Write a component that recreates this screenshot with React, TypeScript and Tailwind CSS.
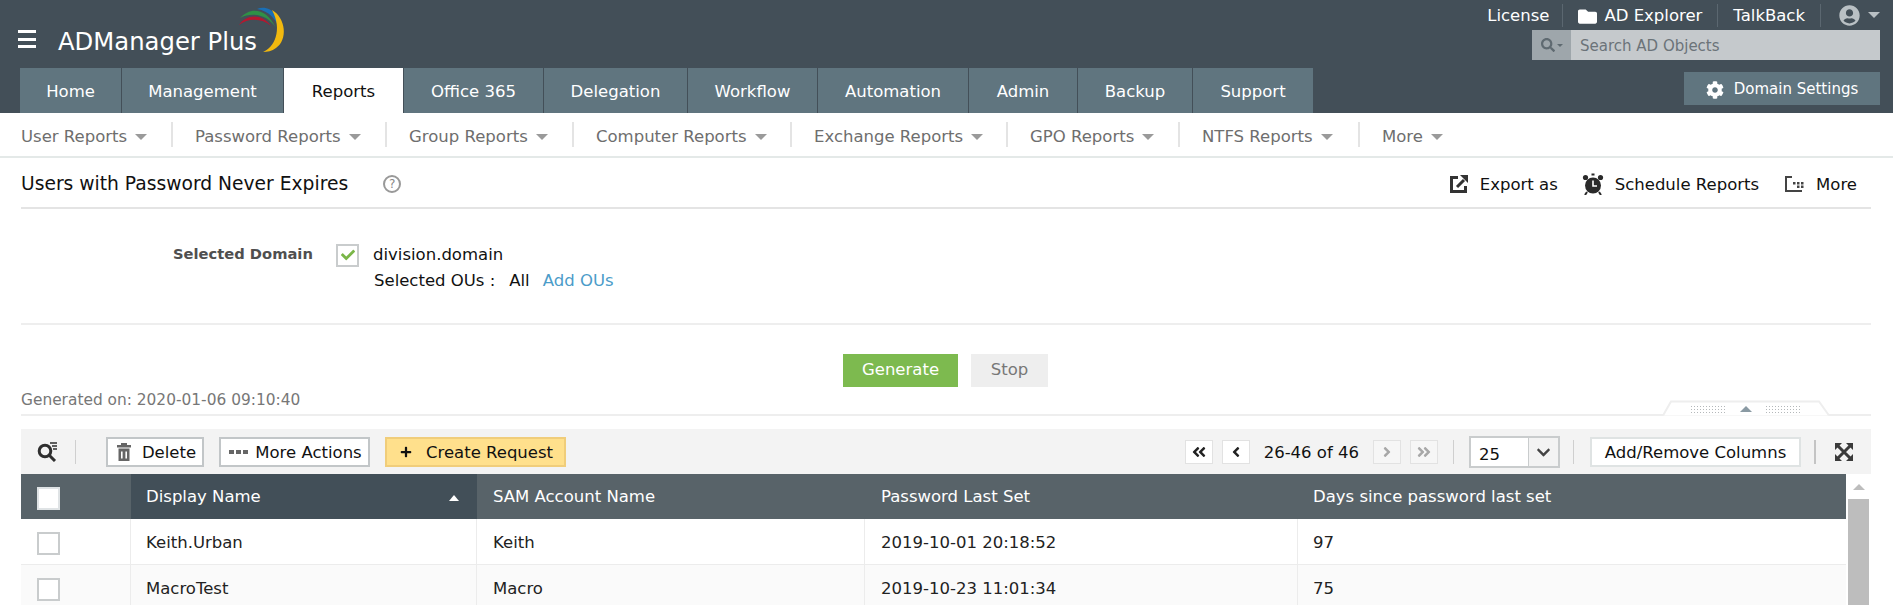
import React from "react";
import { FaCog, FaUserCircle, FaSearch, FaAngleDoubleLeft, FaAngleLeft, FaAngleRight, FaAngleDoubleRight, FaChevronDown, FaCheck, FaPlus, FaFolder } from "react-icons/fa";

const tabs = [
  { t: "Home", w: "w-[101px]" },
  { t: "Management", w: "w-[161px]" },
  { t: "Reports", w: "w-[119px]", active: true },
  { t: "Office 365", w: "w-[139px]" },
  { t: "Delegation", w: "w-[143px]" },
  { t: "Workflow", w: "w-[129px]" },
  { t: "Automation", w: "w-[150px]" },
  { t: "Admin", w: "w-[108px]" },
  { t: "Backup", w: "w-[114px]" },
  { t: "Support", w: "w-[120px]" },
];

const subs = [
  { t: "User Reports", w: "w-[152px]" },
  { t: "Password Reports", w: "w-[214px]" },
  { t: "Group Reports", w: "w-[187px]" },
  { t: "Computer Reports", w: "w-[218px]" },
  { t: "Exchange Reports", w: "w-[216px]" },
  { t: "GPO Reports", w: "w-[172px]" },
  { t: "NTFS Reports", w: "w-[180px]" },
  { t: "More", w: "w-[90px]" },
];

const Caret = ({ c = "border-t-[#9a9a9a]" }: { c?: string }) => (
  <span className={`inline-block w-0 h-0 border-x-[6px] border-x-transparent border-t-[6px] ${c}`} />
);

const Sep = () => <span className="w-px h-[23px] bg-[#5b6770]" />;

const Logo = () => (
  <svg width="52" height="52" viewBox="0 0 52 52" className="absolute left-[236px] top-[4px]">
    <path d="M3 21 C10 10 26 9 35 22 C26 14 12 14 3 21Z" fill="#b5172f" />
    <path d="M4 14 C14 3 30 3 40 24 C31 10 16 8 4 14Z" fill="#2f9146" />
    <path d="M21 5 C32 0 46 10 45 30 C41 15 33 7 21 5Z" fill="#1a6fb5" />
    <path d="M36 6 C50 14 52 36 40 44 C36 47 31 48 27 48 C38 44 47 26 36 6Z" fill="#f2b90f" />
  </svg>
);

const ExportIcon = () => (
  <svg width="20" height="20" viewBox="0 0 20 20">
    <path d="M1 2h8v3H4v11h11v-4h3v7H1z" fill="#333" />
    <path d="M11 1h8v8z" fill="#333" />
    <path d="M8 13l7-7" stroke="#333" strokeWidth="3" />
  </svg>
);
const ClockIcon = () => (
  <svg width="22" height="22" viewBox="0 0 22 22">
    <circle cx="11" cy="12.500" r="8" fill="#2a2a2a" />
    <circle cx="3.500" cy="4.500" r="2.600" fill="#2a2a2a" />
    <circle cx="18.500" cy="4.500" r="2.600" fill="#2a2a2a" />
    <rect x="9.500" y="0.500" width="3" height="2" fill="#2a2a2a" />
    <path d="M5 19l-2 3M17 19l2 3" stroke="#2a2a2a" strokeWidth="2" />
    <path d="M11 7.500v5.500h4" stroke="#fff" strokeWidth="1.600" fill="none" />
  </svg>
);
const MoreIcon = () => (
  <svg width="20" height="20" viewBox="0 0 20 20">
    <path d="M1 2h7v2H3v12h15v2H1z" fill="#444" />
    <rect x="9" y="8" width="2.500" height="2.500" fill="#444" />
    <rect x="13" y="8" width="2.500" height="2.500" fill="#444" />
    <rect x="17" y="8" width="2.500" height="2.500" fill="#444" />
    <rect x="13" y="11.500" width="2.500" height="2.500" fill="#444" />
    <rect x="17" y="11.500" width="2.500" height="2.500" fill="#444" />
  </svg>
);
const TrashIcon = () => (
  <svg width="14" height="18" viewBox="0 0 14 18">
    <rect x="4" y="0" width="6" height="2" fill="#666" />
    <rect x="0" y="2" width="14" height="2.500" fill="#666" />
    <path d="M1.500 5.500h11V18h-11z" fill="#666" />
    <path d="M4.800 8.500v7M9.200 8.500v7" stroke="#fff" strokeWidth="1.600" />
  </svg>
);
const SearchList = () => (
  <svg width="22" height="20" viewBox="0 0 22 20">
    <circle cx="8" cy="9" r="5.800" fill="none" stroke="#2f2f2f" strokeWidth="3" />
    <path d="M12 13l6 6" stroke="#2f2f2f" strokeWidth="3" />
    <path d="M13 1h7M15 4h5M16 7h4" stroke="#2f2f2f" strokeWidth="1.500" />
  </svg>
);
const ExpandIcon = () => (
  <svg width="18" height="18" viewBox="0 0 18 18">
    <path d="M0 0h7L0 7zM18 0h-7l7 7zM0 18h7l-7-7zM18 18h-7l7-7z" fill="#3a3a3a" />
    <path d="M3 3l12 12M15 3L3 15" stroke="#3a3a3a" strokeWidth="3" />
  </svg>
);
const Handle = () => (
  <svg width="168" height="17" viewBox="0 0 168 17" className="absolute left-[1642px] top-[75px]">
    <path d="M0 15.500L8 1.500H156L166 15.500" fill="#fff" stroke="#eeeeee" strokeWidth="2" />
    {[0, 1, 2].map((r) =>
      Array.from({ length: 12 }).map((_, i) => (
        <g key={`${r}-${i}`}>
          <rect x={28 + i * 3} y={6 + r * 3} width="1" height="1" fill="#b4b8ba" />
          <rect x={103 + i * 3} y={6 + r * 3} width="1" height="1" fill="#b4b8ba" />
        </g>
      ))
    )}
    <path d="M77 12l6-6 6 6z" fill="#8a9aa3" />
  </svg>
);
const Box = ({ header }: { header?: boolean }) => (
  <span className={`block w-[23px] h-[23px] border-2 ${header ? "bg-white border-[#dfe3e5]" : "bg-white border-[#c9cccd]"}`} />
);
const PageBtn = ({ dim, children }: { dim?: boolean; children: React.ReactNode }) => (
  <span className={`w-[28px] h-[24px] flex items-center justify-center border border-[#e2e2e2] ${dim ? "bg-[#f6f6f6] text-[#a8a8a8]" : "bg-white text-[#222]"}`}>{children}</span>
);
const ToolSep = () => <span className="block w-px h-[24px] bg-[#cfcfcf]" />;

const cols = "grid grid-cols-[110px_346px_388px_433px_1fr]";
const Row = ({ a, b, c, d, alt }: { a: string; b: string; c: string; d: string; alt?: boolean }) => (
  <div className={`${cols} h-[46px] border-b border-[#ececec] ${alt ? "bg-[#fafafa]" : "bg-white"} text-[#222]`}>
    <div className="flex items-center pt-[4px] pl-[16px] border-r border-[#ececec]"><Box /></div>
    <div className="flex items-center pt-[4px] pl-[15px] border-r border-[#ececec]">{a}</div>
    <div className="flex items-center pt-[4px] pl-[16px] border-r border-[#ececec]">{b}</div>
    <div className="flex items-center pt-[4px] pl-[16px] border-r border-[#ececec]">{c}</div>
    <div className="flex items-center pt-[4px] pl-[15px]">{d}</div>
  </div>
);

export default function App() {
  return (
    <div className="w-[1893px] h-[605px] overflow-hidden bg-white text-[16.5px] text-[#222] font-['DejaVu_Sans',sans-serif]">
      <header className="relative h-[113px] bg-[#434f58] flex justify-between">
        <div className="flex flex-col justify-between">
          <div className="relative h-[68px]">
            <div className="absolute left-[18px] top-[30px] w-[18px] h-[18px] flex flex-col justify-between">
              <span className="h-[3px] bg-white" /><span className="h-[3px] bg-white" /><span className="h-[3px] bg-white" />
            </div>
            <span className="absolute left-[58px] top-[25px] text-[24.3px] leading-[34px] text-white whitespace-nowrap">ADManager Plus</span>
            <Logo />
          </div>
          <nav className="flex pl-[20px] gap-[2px]">
            {tabs.map((x) => (
              <div key={x.t} className={`h-[45px] pt-[3px] flex items-center justify-center ${x.w} ${x.active ? "bg-white text-[#111]" : "bg-[#60757f] text-white"} -mr-[1px]`}>{x.t}</div>
            ))}
          </nav>
        </div>
        <div className="flex flex-col items-end pr-[13px]">
          <div className="h-[30px] flex items-center gap-[15px] text-white">
            <span className="-mr-[2px] pt-[2px]">License</span><Sep />
            <span className="flex items-center gap-[7px] pt-[2px]"><FaFolder className="text-[19px]" />AD Explorer</span><Sep />
            <span className="pt-[2px]">TalkBack</span><Sep />
            <span className="flex items-center gap-[8px] pl-[3px]"><FaUserCircle className="text-[21px] text-[#b9c0c4]" /><Caret c="border-t-[#b9c0c4]" /></span>
          </div>
          <div className="w-[348px] h-[30px] flex bg-[#c5c9cc] text-[15px]">
            <span className="w-[39px] bg-[#9ea6ab] flex items-center justify-center gap-[2px] text-[#5f6a71]"><FaSearch className="text-[14px]" /><span className="inline-block w-0 h-0 border-x-[3px] border-x-transparent border-t-[3px] border-t-[#5f6a71]" /></span>
            <span className="pl-[9px] pt-[2px] flex items-center text-[#6b7379]">Search AD Objects</span>
          </div>
          <div className="mt-[12px] w-[196px] h-[33px] pt-[2px] bg-[#60757f] text-white text-[15px] flex items-center justify-center gap-[10px]"><FaCog className="text-[18px]" />Domain Settings</div>
        </div>
      </header>

      <div className="h-[45px] flex items-center pl-[21px] border-b-2 border-[#e4e9e8] text-[#6e6e6e]">
        {subs.map((s, i) => (
          <div key={s.t} className={`h-[25px] pt-[5px] flex items-center gap-[8px] whitespace-nowrap ${s.w} ${i < subs.length - 1 ? "border-r-2 border-[#e4e4e4]" : ""} ${i > 0 ? "pl-[22px]" : ""}`}>
            {s.t}<Caret />
          </div>
        ))}
      </div>

      <main className="pl-[21px] pr-[22px]">
        <div className="h-[51px] pt-[3px] flex items-center justify-between border-b-2 border-[#e4e4e4]">
          <div className="flex items-center gap-[35px]">
            <span className="text-[18.7px] text-[#111]">Users with Password Never Expires</span>
            <span className="w-[18px] h-[18px] rounded-full border-2 border-[#999] text-[#888] text-[12px] flex items-center justify-center">?</span>
          </div>
          <div className="flex items-center text-[#111] pr-[14px]">
            <span className="flex items-center gap-[11px] mr-[24px]"><ExportIcon /><span className="pt-[2px]">Export as</span></span>
            <span className="flex items-center gap-[11px] mr-[25px]"><ClockIcon /><span className="pt-[2px]">Schedule Reports</span></span>
            <span className="flex items-center gap-[12px]"><MoreIcon /><span className="pt-[2px]">More</span></span>
          </div>
        </div>

        <div className="h-[116px] border-b-2 border-[#eeeeee] pt-[34px] flex">
          <span className="ml-[152px] w-[163px] h-[23px] flex items-center font-bold text-[14.7px] text-[#4f4f4f]">Selected Domain</span>
          <div>
            <div className="flex items-center gap-[14px]">
              <span className="w-[23px] h-[23px] border-2 border-[#c9cccd] flex items-center justify-center text-[#7ab648]"><FaCheck className="text-[14px]" /></span>
              <span className="text-[#111]">division.domain</span>
            </div>
            <div className="pl-[38px] mt-[1px] text-[#111] flex">
              <span>Selected OUs :</span><span className="ml-[14px]">All</span><span className="ml-[13px] text-[#4b9cc9]">Add OUs</span>
            </div>
          </div>
        </div>

        <div className="relative h-[91px] border-b-2 border-[#eeeeee]">
          <div className="absolute left-[822px] top-[29px] flex gap-[13px]">
            <span className="w-[115px] h-[33px] bg-[#7dba4f] text-white flex items-center justify-center">Generate</span>
            <span className="w-[77px] h-[33px] bg-[#eeeeee] text-[#777] flex items-center justify-center">Stop</span>
          </div>
          <span className="absolute left-0 top-[63px] text-[15.4px] leading-[24px] text-[#777]">Generated on: 2020-01-06 09:10:40</span>
          <Handle />
        </div>

        <div className="mt-[13px] h-[45px] pt-[1px] bg-[#f3f3f3] flex items-center">
          <span className="ml-[16px]"><SearchList /></span>
          <span className="ml-[16px]"><ToolSep /></span>
          <div className="ml-[30px] flex items-center gap-[15px]">
            <span className="w-[98px] h-[30px] pt-[3px] pl-[3px] bg-white border-2 border-[#c2c6c8] flex items-center justify-center gap-[11px] text-[#111]"><span className="-mt-[3px]"><TrashIcon /></span>Delete</span>
            <span className="w-[151px] h-[30px] pt-[3px] pl-[2px] bg-white border-2 border-[#c2c6c8] flex items-center justify-center gap-[7px] text-[#111]"><span className="flex gap-[2px] -mt-[3px]"><i className="w-[5px] h-[4px] bg-[#666]" /><i className="w-[5px] h-[4px] bg-[#666]" /><i className="w-[5px] h-[4px] bg-[#666]" /></span>More Actions</span>
            <span className="w-[181px] h-[30px] pt-[3px] pl-[2px] bg-[#ffe08c] border-2 border-[#f0cd7a] flex items-center justify-center gap-[14px] text-[#111]"><FaPlus className="text-[12px] -mt-[3px]" />Create Request</span>
          </div>
          <div className="ml-auto flex items-center text-[#111]">
            <div className="flex items-center gap-[9px]">
              <PageBtn><FaAngleDoubleLeft className="text-[16px]" /></PageBtn>
              <PageBtn><FaAngleLeft className="text-[16px]" /></PageBtn>
              <span className="mx-[5px] pt-[3px]">26-46 of 46</span>
              <PageBtn dim><FaAngleRight className="text-[16px]" /></PageBtn>
              <PageBtn dim><FaAngleDoubleRight className="text-[16px]" /></PageBtn>
            </div>
            <span className="ml-[15px]"><ToolSep /></span>
            <div className="ml-[15px] w-[91px] h-[32px] border-2 border-[#c9cccd] bg-white flex">
              <span className="w-[57px] pt-[6px] flex items-center pl-[8px]">25</span>
              <span className="flex-1 bg-[#f3f3f3] border-l border-[#c9cccd] flex items-center justify-center"><FaChevronDown className="text-[15px] text-[#444]" /></span>
            </div>
            <span className="ml-[13px]"><ToolSep /></span>
            <span className="ml-[16px] w-[211px] h-[30px] pt-[3px] bg-white border-2 border-[#dfe3e3] flex items-center justify-center">Add/Remove Columns</span>
            <span className="ml-[13px]"><span className="block w-[2px] h-[24px] bg-[#c4c4c4]" /></span>
            <span className="ml-[19px] mr-[18px] flex"><ExpandIcon /></span>
          </div>
        </div>

        <div className="flex">
          <div className="w-[1825px]">
            <div className={`${cols} h-[45px] bg-[#586369] text-white`}>
              <div className="flex items-center pt-[4px] pl-[16px]"><Box header /></div>
              <div className="flex items-center justify-between pt-[2px] pl-[15px] pr-[18px] bg-[#424f58]">Display Name<span className="w-0 h-0 border-x-[5px] border-x-transparent border-b-[6px] border-b-white" /></div>
              <div className="flex items-center pt-[2px] pl-[16px]">SAM Account Name</div>
              <div className="flex items-center pt-[2px] pl-[16px]">Password Last Set</div>
              <div className="flex items-center pt-[2px] pl-[15px]">Days since password last set</div>
            </div>
            <Row a="Keith.Urban" b="Keith" c="2019-10-01 20:18:52" d="97" />
            <Row alt a="MacroTest" b="Macro" c="2019-10-23 11:01:34" d="75" />
          </div>
          <div className="ml-[2px] w-[21px] flex flex-col items-center bg-white">
            <span className="mt-[10px] w-0 h-0 border-x-[6px] border-x-transparent border-b-[6px] border-b-[#bdbdbd]" />
            <span className="mt-[9px] w-full h-[200px] bg-[#bdbdbd]" />
          </div>
        </div>
      </main>
    </div>
  );
}
